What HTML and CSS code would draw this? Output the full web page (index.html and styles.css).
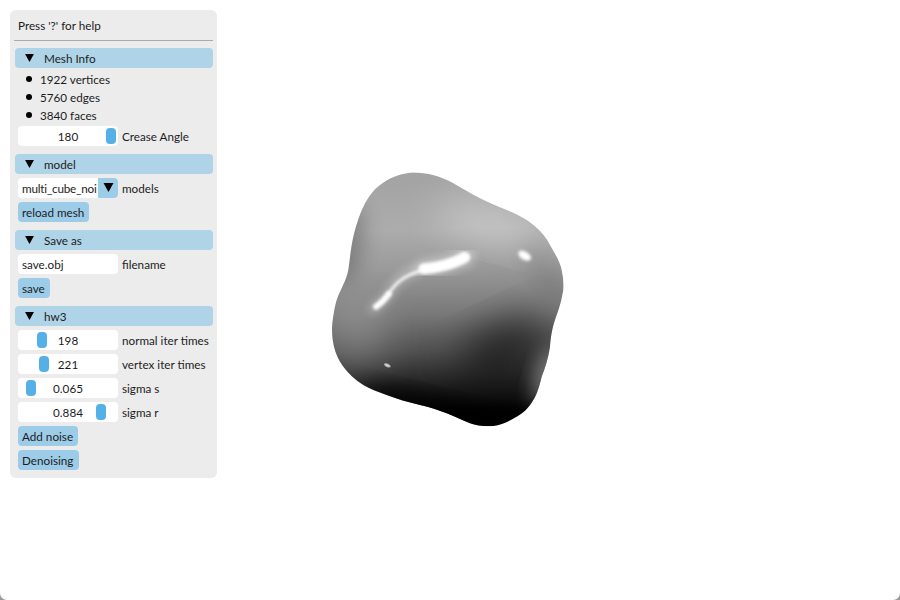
FILE: index.html
```html
<!DOCTYPE html>
<html lang="en">
<head>
<meta charset="utf-8">
<title>Mesh viewer</title>
<link rel="stylesheet" href="styles.css">
</head>
<body>
<main class="window">
  <aside class="panel">
    <div class="help">Press '?' for help</div>
    <hr class="sep">
    <section class="section">
      <div class="header"><svg class="tri" viewBox="0 0 10 9"><path d="M0 0H10L5 9Z"/></svg><span>Mesh Info</span></div>
      <ul class="bullets">
        <li>1922 vertices</li>
        <li>5760 edges</li>
        <li>3840 faces</li>
      </ul>
      <div class="row">
        <div class="field center"><span>180</span><i class="handle" style="left:88px"></i></div>
        <label>Crease Angle</label>
      </div>
    </section>
    <section class="section">
      <div class="header"><svg class="tri" viewBox="0 0 10 9"><path d="M0 0H10L5 9Z"/></svg><span>model</span></div>
      <div class="row">
        <div class="field combo"><span class="combo-text">multi_cube_noi</span><span class="combo-btn"><svg class="tri-small" viewBox="0 0 10 9"><path d="M0 0H10L5 9Z"/></svg></span></div>
        <label>models</label>
      </div>
      <div class="row"><button class="btn">reload mesh</button></div>
    </section>
    <section class="section">
      <div class="header"><svg class="tri" viewBox="0 0 10 9"><path d="M0 0H10L5 9Z"/></svg><span>Save as</span></div>
      <div class="row">
        <div class="field text"><span>save.obj</span></div>
        <label>filename</label>
      </div>
      <div class="row"><button class="btn">save</button></div>
    </section>
    <section class="section">
      <div class="header"><svg class="tri" viewBox="0 0 10 9"><path d="M0 0H10L5 9Z"/></svg><span>hw3</span></div>
      <div class="row">
        <div class="field center"><span>198</span><i class="handle" style="left:19px"></i></div>
        <label>normal iter times</label>
      </div>
      <div class="row">
        <div class="field center"><span>221</span><i class="handle" style="left:21px"></i></div>
        <label>vertex iter times</label>
      </div>
      <div class="row">
        <div class="field center"><span>0.065</span><i class="handle" style="left:8px"></i></div>
        <label>sigma s</label>
      </div>
      <div class="row">
        <div class="field center"><span>0.884</span><i class="handle" style="left:78px"></i></div>
        <label>sigma r</label>
      </div>
      <div class="row"><button class="btn">Add noise</button></div>
      <div class="row"><button class="btn">Denoising</button></div>
    </section>
  </aside>
  <div class="viewport">
    <svg class="blob" viewBox="0 0 780 840" aria-label="Rendered mesh">
      <defs>
        <clipPath id="shape">
          <path d="M270 38C315 36 360 48 400 70C430 87 455 102 480 115C510 130 535 140 560 150C595 165 620 178 640 195C665 215 680 235 690 255C710 290 722 310 725 330C732 365 732 385 728 400C722 435 712 460 705 480C695 510 692 535 690 560C685 595 675 625 665 650C658 680 650 705 640 720C625 745 610 760 590 770C565 785 545 795 520 798C495 800 470 797 450 790C425 780 405 770 380 760C355 750 330 742 300 735C265 727 230 717 200 705C172 695 150 687 130 675C105 660 85 640 70 620C55 600 47 580 42 560C36 535 35 510 37 490C40 465 44 440 50 420C60 390 78 365 85 330C90 295 93 260 100 230C107 200 118 165 130 140C145 110 160 90 180 75C205 55 235 42 270 38Z"/>
        </clipPath>
        <linearGradient id="base" gradientUnits="userSpaceOnUse" x1="380" y1="60" x2="400" y2="790">
          <stop offset="0" stop-color="#a4a4a4"/>
          <stop offset=".2" stop-color="#acacac"/>
          <stop offset=".36" stop-color="#9a9a9a"/>
          <stop offset=".55" stop-color="#787878"/>
          <stop offset=".7" stop-color="#505050"/>
          <stop offset=".84" stop-color="#202020"/>
          <stop offset=".94" stop-color="#040404"/>
          <stop offset="1" stop-color="#000"/>
        </linearGradient>
        <filter id="b60" x="-60%" y="-60%" width="220%" height="220%"><feGaussianBlur stdDeviation="60"/></filter>
        <filter id="b30" x="-60%" y="-60%" width="220%" height="220%"><feGaussianBlur stdDeviation="30"/></filter>
        <filter id="b14" x="-60%" y="-60%" width="220%" height="220%"><feGaussianBlur stdDeviation="14"/></filter>
        <filter id="b4" x="-50%" y="-50%" width="200%" height="200%"><feGaussianBlur stdDeviation="4"/></filter>
        <filter id="b2" x="-50%" y="-50%" width="200%" height="200%"><feGaussianBlur stdDeviation="2"/></filter>
      </defs>
      <g clip-path="url(#shape)">
        <rect width="780" height="840" fill="url(#base)"/>
        <ellipse class="lit" cx="510" cy="195" rx="170" ry="50" opacity=".42" filter="url(#b60)" transform="rotate(15 510 195)"/>
        <ellipse class="shade" cx="80" cy="250" rx="50" ry="120" opacity=".22" filter="url(#b30)" transform="rotate(12 80 250)"/>
        <ellipse class="lit" cx="110" cy="530" rx="90" ry="120" opacity=".2" filter="url(#b60)"/>
        <ellipse class="shade" cx="555" cy="560" rx="140" ry="70" opacity=".62" filter="url(#b60)" transform="rotate(-25 555 560)"/>
        <ellipse class="shade" cx="670" cy="330" rx="90" ry="30" opacity=".1" filter="url(#b30)" transform="rotate(50 670 330)"/>
        <ellipse class="lit" cx="680" cy="655" rx="35" ry="85" opacity=".42" filter="url(#b30)" transform="rotate(15 680 655)"/>
        <ellipse class="shade" cx="330" cy="735" rx="220" ry="28" opacity=".85" filter="url(#b30)" transform="rotate(14 330 735)"/>
        <path class="glow" d="M160 446C180 428 196 420 208 398C222 372 244 344 290 330" stroke-width="30" opacity=".3" filter="url(#b14)"/>
        <path class="glow" d="M310 326C350 322 400 308 436 292" stroke-width="56" opacity=".35" filter="url(#b14)"/>
        <path class="glow" d="M168 440C180 432 192 422 206 402" stroke-width="18" filter="url(#b4)"/>
        <path class="glow" d="M206 402C222 374 252 346 304 332" stroke-width="9" opacity=".9" filter="url(#b4)"/>
        <path class="glow" d="M312 326C350 324 400 312 434 292" stroke-width="33" filter="url(#b4)"/>
        <ellipse class="lit" cx="614" cy="287" rx="21" ry="12" filter="url(#b4)" transform="rotate(32 614 287)"/>
        <ellipse cx="202" cy="616" rx="10" ry="5" fill="#cfcfcf" filter="url(#b2)" transform="rotate(25 202 616)"/>
      </g>
    </svg>
  </div>
</main>
</body>
</html>
```
FILE: styles.css
```css
* { box-sizing: border-box; }
html, body { margin: 0; height: 100%; background: #9a9a9a; }
body { width: 900px; height: 600px; overflow: hidden; }
.window {
  position: relative;
  width: 900px;
  height: 600px;
  padding: 10px;
  background: #fff;
  border-radius: 0 0 7px 7px;
  font-family: "Lato", sans-serif;
  font-size: 11.7px;
  line-height: 16px;
  color: #1c1c1c;
}
.panel {
  width: 207px;
  height: 468px;
  padding: 0 4px 0 5px;
  background: #ececec;
  border-radius: 6px;
}
.help { height: 30px; padding: 7px 0 0 3px; }
.sep {
  height: 1px;
  margin: 0 0 7px -1px;
  border: 0;
  background: #a9a9ae;
}
.section { margin-bottom: 8px; }
.header {
  display: flex;
  align-items: center;
  height: 20px;
  margin-bottom: 4px;
  padding-left: 10px;
  background: #afd4e8;
  border-radius: 4px;
}
.tri { width: 9px; height: 8px; margin: -1px 10px 0 0; flex: none; }
.tri-small { width: 11px; height: 9px; margin-top: -2px; }
.bullets { margin: -1px 0 1px; padding: 0; list-style: none; }
.bullets li {
  display: flex;
  align-items: center;
  height: 18px;
  padding: 0 0 2px 25px;
  position: relative;
}
.bullets li::before {
  content: "";
  position: absolute;
  left: 11px;
  top: 5px;
  width: 6px;
  height: 6px;
  border-radius: 50%;
  background: #000;
}
.row {
  display: flex;
  align-items: center;
  gap: 4px;
  height: 20px;
  margin: 0 0 4px 3px;
}
.section .row:last-child { margin-bottom: 0; }
.field {
  position: relative;
  display: flex;
  align-items: center;
  flex: none;
  width: 100px;
  height: 20px;
  background: #fff;
  border-radius: 4px;
}
.center { justify-content: center; }
.text { padding-left: 4px; }
.handle {
  position: absolute;
  top: 2px;
  width: 10px;
  height: 16px;
  background: #56b0e8;
  border-radius: 4px;
}
.combo { overflow: hidden; }
.combo-text { width: 80px; padding-left: 4px; overflow: hidden; white-space: nowrap; letter-spacing: -0.2px; }
.combo-btn {
  display: flex;
  align-items: center;
  justify-content: center;
  width: 20px;
  height: 20px;
  background: #9dcce8;
}
.btn {
  height: 20px;
  padding: 0 5.2px 0 4px;
  border: 0;
  border-radius: 4px;
  background: #9dcce8;
  color: inherit;
  font: inherit;
}
.viewport {
  position: absolute;
  left: 0;
  top: 0;
  pointer-events: none;
}
.blob {
  position: absolute;
  left: 320px;
  top: 160px;
  width: 260px;
  height: 280px;
}
.lit { fill: #fff; }
.shade { fill: #000; }
.glow { fill: none; stroke: #fff; stroke-linecap: round; }
```
